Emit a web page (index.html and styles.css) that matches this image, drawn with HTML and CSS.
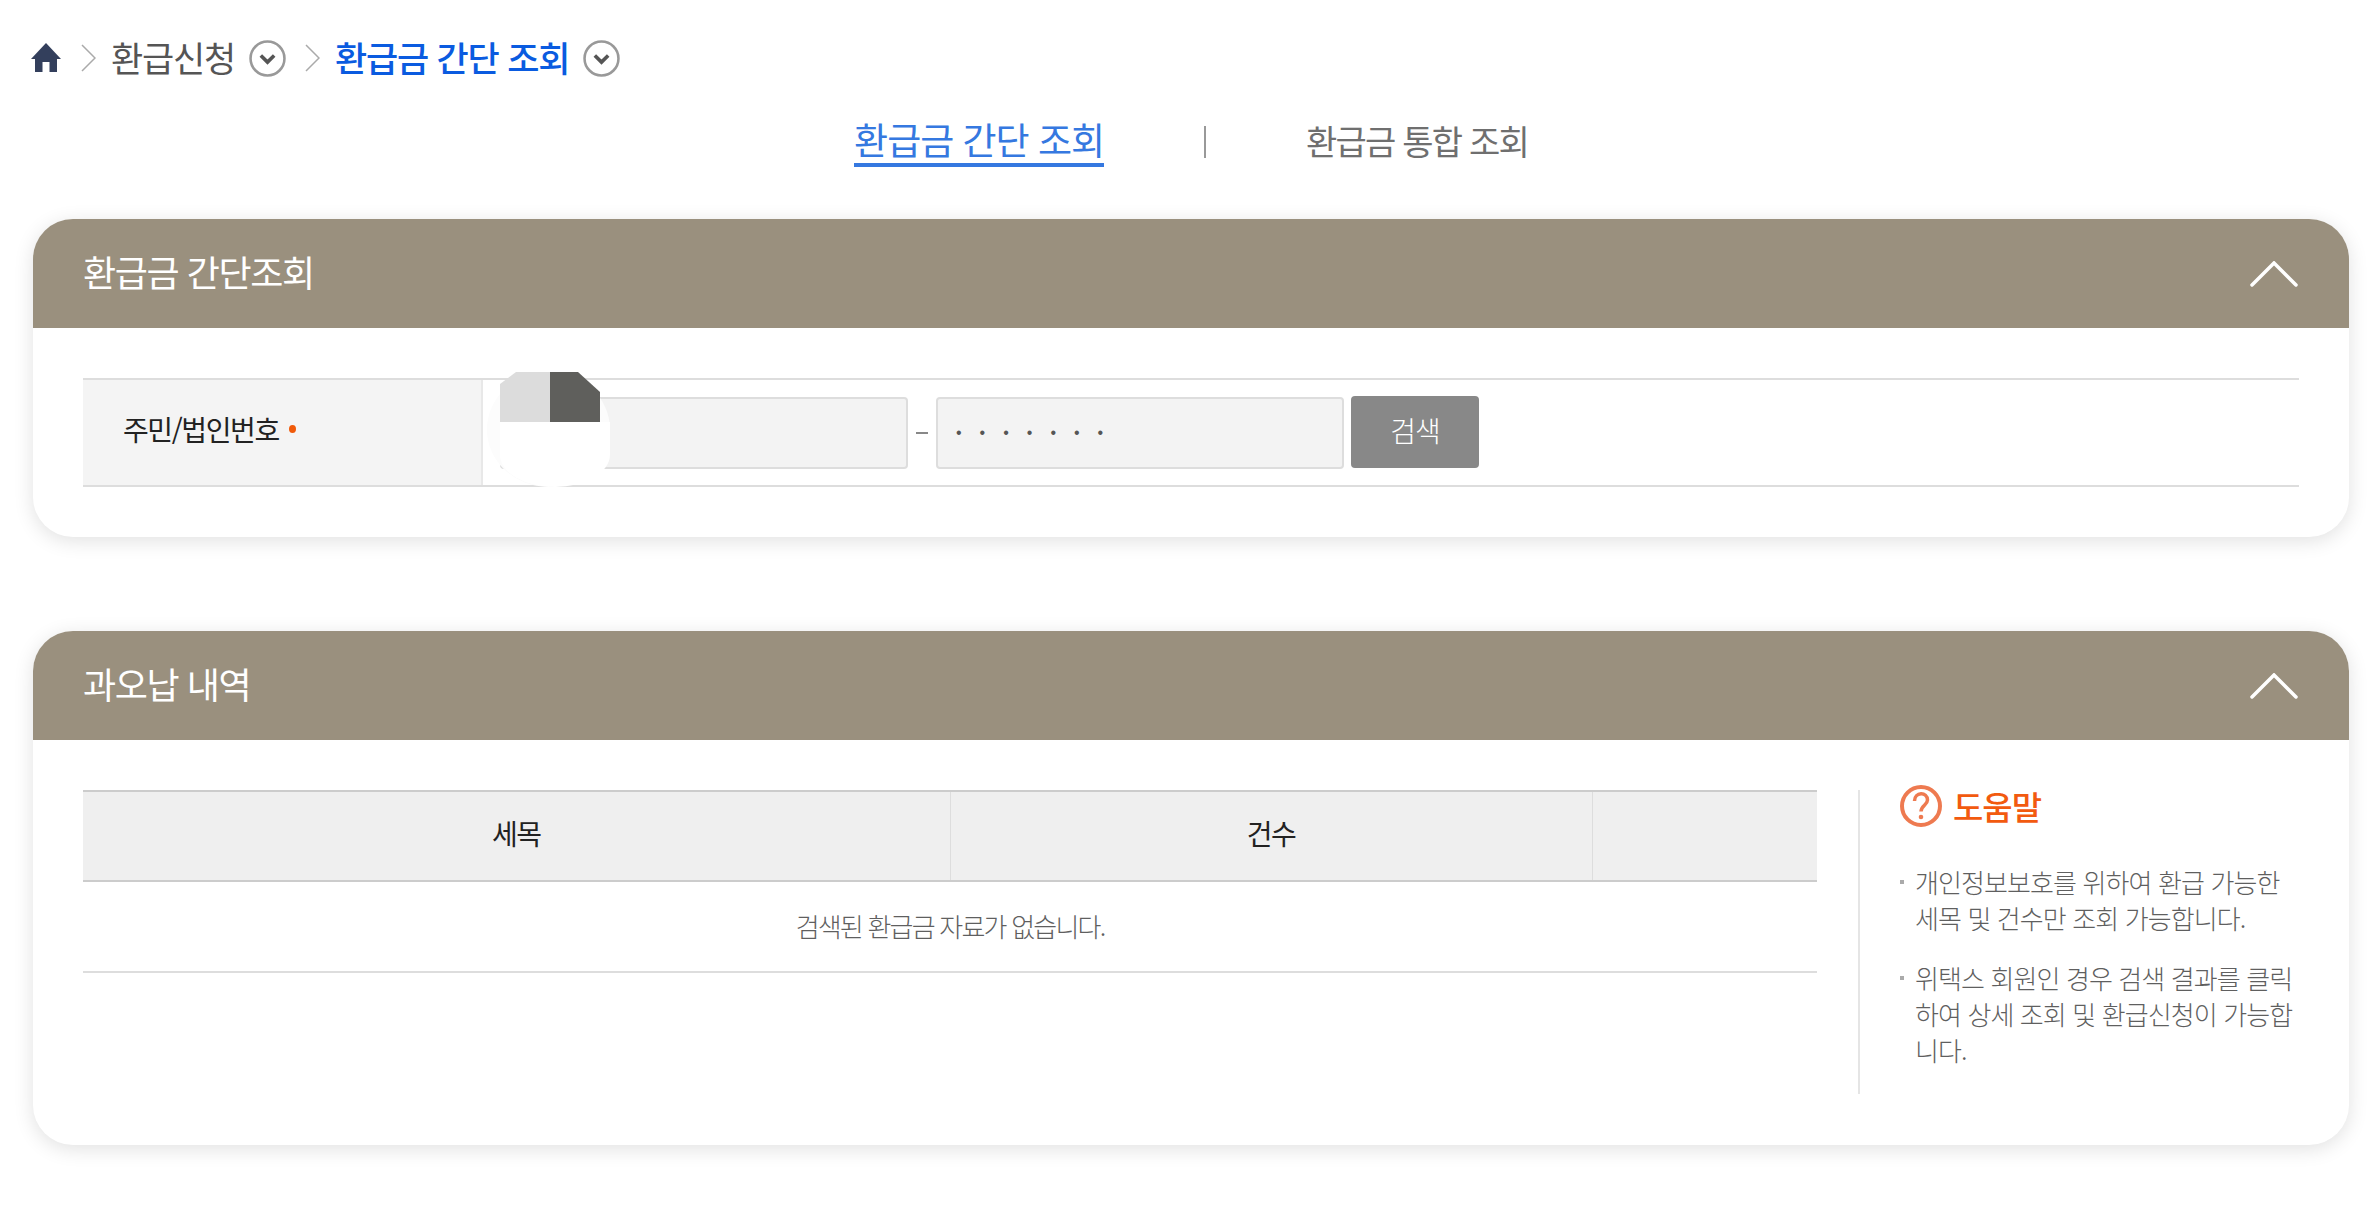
FILE: index.html
```html
<!DOCTYPE html>
<html lang="ko">
<head>
  <meta charset="UTF-8" />
  <title>환급금 간단 조회</title>
  <link rel="stylesheet" href="styles.css">
</head>
<body>
  <div class="page">
    <!-- Breadcrumb -->
    <div class="crumbs">
      <svg class="home" viewBox="0 0 30 30"><path fill="#333f5c" d="M15 0 L30 16 L26 16 L26 29 L18.500 29 L18.500 19 L11.500 19 L11.500 29 L4 29 L4 16 L0 16 Z"/></svg>
      <svg class="sep" viewBox="0 0 15 28"><path fill="none" stroke="#aaa" stroke-width="1.500" d="M1 1 L14 14 L1 27"/></svg>
      <span class="crumb">환급신청</span>
      <svg class="more" viewBox="0 0 36 36"><circle cx="18" cy="18" r="16.500" fill="#fff" stroke="#999" stroke-width="2.500"/><path fill="none" stroke="#555" stroke-width="3.500" d="M11.500 15 L18 21.500 L24.500 15"/></svg>
      <svg class="sep sep-second" viewBox="0 0 15 28"><path fill="none" stroke="#aaa" stroke-width="1.500" d="M1 1 L14 14 L1 27"/></svg>
      <span class="crumb crumb-current">환급금 간단 조회</span>
      <svg class="more" viewBox="0 0 36 36"><circle cx="18" cy="18" r="16.500" fill="#fff" stroke="#999" stroke-width="2.500"/><path fill="none" stroke="#555" stroke-width="3.500" d="M11.500 15 L18 21.500 L24.500 15"/></svg>
    </div>

    <!-- Tabs -->
    <div class="tabs">
      <a class="tab tab-active">환급금 간단 조회</a>
      <span class="tab-line"></span>
      <a class="tab">환급금 통합 조회</a>
    </div>

    <!-- Search card -->
    <section class="card">
      <div class="card-head">
        <h2>환급금 간단조회</h2>
        <svg class="fold" viewBox="0 0 48 26"><path fill="none" stroke="#fff" stroke-width="3.500" stroke-linecap="round" d="M2 24 L24 2 L46 24"/></svg>
      </div>
      <div class="card-body">
        <div class="form-row">
          <div class="form-label">주민/법인번호<span class="req"></span></div>
          <div class="form-value">
            <input class="field" type="text" />
            <span class="dash"></span>
            <input class="field field-pass" type="password" value="1234567" />
            <button class="btn">검색</button>
            <div class="redact">
              <div class="redact-top"><span></span><span></span></div>
              <div class="redact-bottom"></div>
            </div>
          </div>
        </div>
      </div>
    </section>

    <!-- Result card -->
    <section class="card card-result">
      <div class="card-head">
        <h2>과오납 내역</h2>
        <svg class="fold" viewBox="0 0 48 26"><path fill="none" stroke="#fff" stroke-width="3.500" stroke-linecap="round" d="M2 24 L24 2 L46 24"/></svg>
      </div>
      <div class="card-body result-body">
        <table class="result-table">
          <colgroup><col class="col-a"><col class="col-b"><col></colgroup>
          <thead>
            <tr><th>세목</th><th>건수</th><th></th></tr>
          </thead>
          <tbody>
            <tr><td colspan="3">검색된 환급금 자료가 없습니다.</td></tr>
          </tbody>
        </table>
        <aside class="help">
          <div class="help-title">
            <svg class="help-icon" viewBox="0 0 42 42"><circle cx="21" cy="21" r="19" fill="none" stroke="#ee7a50" stroke-width="4"/><path fill="none" stroke="#ee7a50" stroke-width="3.500" d="M14.500 16 C14.500 6.500 27.500 6.500 27.500 15 C27.500 20 21 20.500 21 26.500"/><circle cx="21" cy="32" r="2.300" fill="#ee7a50"/></svg>
            <span>도움말</span>
          </div>
          <ul class="help-list">
            <li>개인정보보호를 위하여 환급 가능한 세목 및 건수만 조회 가능합니다.</li>
            <li>위택스 회원인 경우 검색 결과를 클릭하여 상세 조회 및 환급신청이 가능합니다.</li>
          </ul>
        </aside>
      </div>
    </section>
  </div>
</body>
</html>
```

FILE: styles.css
```css
* {
  box-sizing: border-box;
}

body {
  margin: 0;
  background-color: #fff;
  color: #222;
  font-family: 'Noto Sans CJK KR', 'Noto Sans', sans-serif;
}

.page {
  min-height: 100vh;
  padding: 40px 23px 0 33px;
}

/* Breadcrumb */
.crumbs {
  display: flex;
  align-items: center;
  height: 36px;
  margin-left: -2px;
}

.home {
  width: 30px;
  height: 30px;
}

.sep {
  width: 15px;
  height: 28px;
  margin-left: 20px;
}

.sep-second {
  margin-left: 19px;
}

.crumb {
  margin-left: 15px;
  margin-top: -2px;
  font-size: 35px;
  line-height: 36px;
  letter-spacing: -1.200px;
  color: #555;
}

.crumb-current {
  color: #0a5be0;
  font-weight: 500;
}

.more {
  width: 37px;
  height: 37px;
  margin-left: 14px;
}

/* Tabs */
.tabs {
  display: flex;
  align-items: center;
  justify-content: center;
  gap: 100px;
  height: 50px;
  margin-top: 41px;
}

.tab {
  margin-bottom: 3px;
  font-size: 34px;
  line-height: 46px;
  letter-spacing: -1.800px;
  color: #6f6f6f;
}

.tab-active {
  margin-bottom: 0;
  padding-bottom: 2px;
  font-size: 37px;
  line-height: 44px;
  letter-spacing: -1px;
  color: #3578e0;
  border-bottom: 4px solid #3578e0;
}

.tab-line {
  width: 2px;
  height: 32px;
  background-color: #999;
}

/* Cards */
.card {
  margin-top: 52px;
  border-radius: 40px;
  background-color: #fff;
  box-shadow: 0 4px 20px rgba(0, 0, 0, 0.12);
}

.card-result {
  margin-top: 94px;
}

.card-head {
  display: flex;
  align-items: center;
  justify-content: space-between;
  height: 109px;
  padding: 0 51px 0 50px;
  border-radius: 40px 40px 0 0;
  background-color: #9a907e;
}

.card-head h2 {
  margin: 0 0 5px;
  font-size: 36px;
  font-weight: 400;
  letter-spacing: -1.400px;
  color: #fff;
}

.fold {
  width: 48px;
  height: 26px;
}

.card-body {
  padding: 50px 50px 50px 50px;
}

/* Search form */
.form-row {
  display: flex;
  height: 109px;
  border-top: 2px solid #ddd;
  border-bottom: 2px solid #ddd;
}

.form-label {
  display: flex;
  align-items: center;
  width: 400px;
  padding: 0 0 8px 40px;
  border-right: 2px solid #e8e8e8;
  background-color: #f4f4f4;
  font-size: 28px;
  letter-spacing: -1.400px;
  color: #222;
}

.req {
  width: 7px;
  height: 8px;
  margin-left: 10px;
  border-radius: 50%;
  background-color: #f05a0a;
}

.form-value {
  position: relative;
  display: flex;
  align-items: center;
  padding-left: 17px;
}

.field {
  width: 408px;
  height: 72px;
  padding: 0 18px;
  border: 2px solid #ddd;
  border-radius: 4px;
  background-color: #f3f3f3;
  outline: none;
}

.field-pass {
  font-size: 16px;
  letter-spacing: 18px;
  color: #555;
}

.dash {
  width: 12px;
  height: 2px;
  margin: 0 8px;
  background-color: #888;
}

.btn {
  width: 128px;
  height: 72px;
  margin: -2px 0 0 7px;
  padding-bottom: 4px;
  border: none;
  border-radius: 4px;
  background-color: #888;
  color: #fff;
  font-family: inherit;
  font-size: 28px;
  font-weight: 300;
  letter-spacing: -1px;
}

/* white patch that hides the first id field */
.redact {
  position: absolute;
  top: -8px;
  left: 4px;
  width: 123px;
  height: 115px;
  border-radius: 50%;
  background-color: #fcfcfc;
}

.redact-top {
  display: flex;
  width: 100px;
  height: 50px;
  margin-left: 13px;
  clip-path: polygon(16px 0, 78px 0, 100px 20px, 100px 100%, 0 100%, 0 12px);
}

.redact-top span {
  width: 50px;
  background-color: #dcdcdc;
}

.redact-top span + span {
  background-color: #5f5f5c;
}

.redact-bottom {
  width: 110px;
  height: 65px;
  margin-left: 13px;
  border-radius: 0 0 50% 50%;
  background-color: #fff;
}

/* Result table */
.result-body {
  display: flex;
  align-items: flex-start;
  padding: 50px 51px 51px 50px;
}

.result-table {
  width: 1734px;
  border-collapse: collapse;
  table-layout: fixed;
}

.col-a {
  width: 867px;
}

.col-b {
  width: 642px;
}

.result-table th {
  height: 90px;
  padding-bottom: 8px;
  border-top: 2px solid #ccc;
  border-bottom: 2px solid #ccc;
  border-left: 1px solid #ddd;
  background-color: #efefef;
  font-size: 28px;
  font-weight: 400;
  letter-spacing: -1.400px;
  color: #222;
}

.result-table th:first-child {
  border-left: none;
}

.result-table td {
  height: 91px;
  padding-bottom: 4px;
  border-bottom: 2px solid #ddd;
  text-align: center;
  font-size: 26px;
  font-weight: 300;
  letter-spacing: -1.800px;
  color: #5f5f5f;
}

/* Help */
.help {
  width: 440px;
  height: 304px;
  margin-left: 41px;
  padding-left: 40px;
  border-left: 2px solid #e5e5e5;
}

.help-title {
  display: flex;
  align-items: center;
  gap: 11px;
  height: 42px;
  margin-top: -5px;
  font-size: 33px;
  font-weight: 500;
  letter-spacing: -1px;
  color: #f25a0f;
}

.help-icon {
  width: 42px;
  height: 42px;
}

.help-list {
  margin: 37px 0 0;
  padding: 0;
  list-style: none;
}

.help-list li {
  position: relative;
  margin-bottom: 24px;
  padding-left: 15px;
  font-size: 26px;
  font-weight: 300;
  line-height: 36px;
  letter-spacing: -0.900px;
  word-break: break-all;
  color: #5f5f5f;
}

.help-list li::before {
  content: "";
  position: absolute;
  top: 16px;
  left: 0;
  width: 4px;
  height: 4px;
  background-color: #aaa;
}
```
